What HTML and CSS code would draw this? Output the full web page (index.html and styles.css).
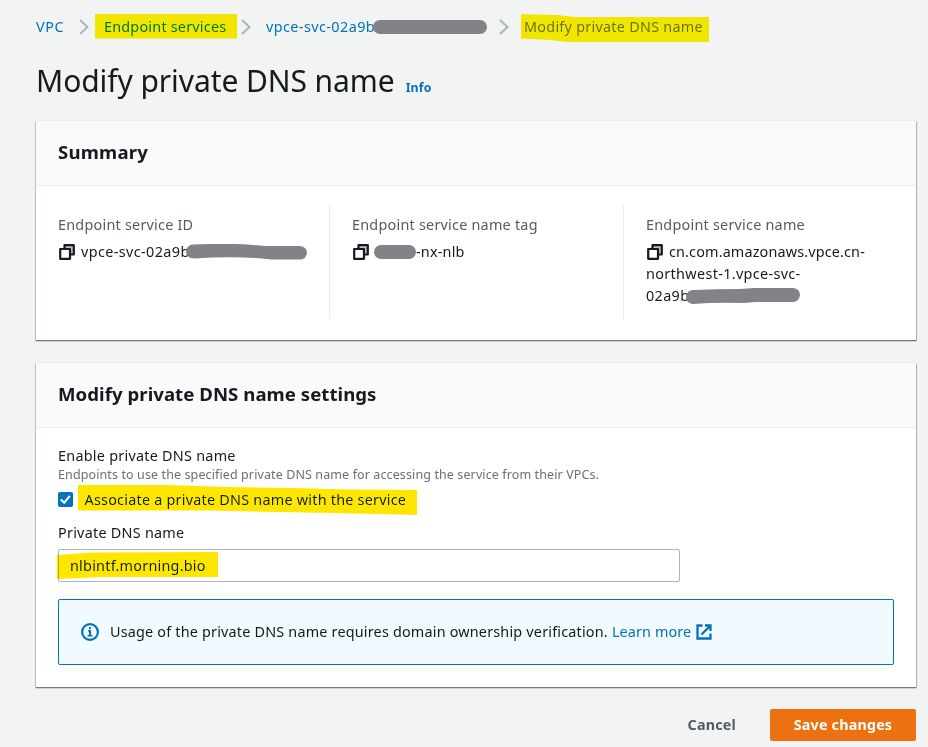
FILE: index.html
```html
<!DOCTYPE html>
<html lang="en">
<head>
<meta charset="utf-8">
<title>Modify private DNS name</title>
<link rel="stylesheet" href="styles.css">
</head>
<body>
<svg class="defs" width="0" height="0">
  <symbol id="copy" viewBox="0 0 16 16">
    <path d="M5.500 5V1.200H14.800V10.500H11" fill="#bfc1c4" stroke="#16191f" stroke-width="2.200" stroke-linejoin="round"/>
    <rect x="1.200" y="5" width="9.800" height="9.800" fill="#fff" stroke="#16191f" stroke-width="2.200" stroke-linejoin="round"/>
  </symbol>
  <symbol id="chevron" viewBox="0 0 10 16">
    <path d="M1 1L8.500 8L1 15" fill="none" stroke="#aab7b8" stroke-width="2"/>
  </symbol>
</svg>
<main class="page">
  <nav class="crumbs">
    <a class="crumb crumb-vpc">VPC</a>
    <svg class="chev"><use href="#chevron"/></svg>
    <a class="crumb crumb-services">Endpoint services<svg class="mark mark-services" viewBox="0 0 142 25"><path d="M0 0H142V24.500H0Z"/></svg></a>
    <svg class="chev"><use href="#chevron"/></svg>
    <a class="crumb crumb-id">vpce-svc-02a9b<i class="redact redact-crumb"></i></a>
    <svg class="chev"><use href="#chevron"/></svg>
    <span class="crumb crumb-current">Modify private DNS name<svg class="mark mark-current" viewBox="0 0 188 28"><path d="M0 0L36 1L54 3H188V28H45L30 26L0 24.500Z"/></svg></span>
  </nav>
  <header class="title-row">
    <h1>Modify private DNS name</h1>
    <a class="info">Info</a>
  </header>

  <section class="card summary">
    <div class="card-head"><h2 class="h-summary">Summary</h2></div>
    <div class="columns">
      <div class="col">
        <div class="label">Endpoint service ID</div>
        <div class="value"><svg class="copy"><use href="#copy"/></svg><span class="v-id">vpce-svc-02a9b</span><svg class="scribble scribble-id" viewBox="0 0 121 16"><path d="M7 0.500Q30-.5 58 .2L80 2H114Q121 3 121 9Q120 15.500 114 15.500H86L70 14Q40 12.500 8 14.500Q0 14 0 7Q1 1 7 .5Z"/></svg></div>
      </div>
      <div class="col">
        <div class="label">Endpoint service name tag</div>
        <div class="value"><svg class="copy"><use href="#copy"/></svg><i class="redact redact-tag"></i><span class="v-tag">-nx-nlb</span></div>
      </div>
      <div class="col">
        <div class="label">Endpoint service name</div>
        <div class="value"><svg class="copy"><use href="#copy"/></svg><span class="v-n1">cn.com.amazonaws.vpce.cn-</span><br><span class="v-n2">northwest-1.vpce-svc-</span><br><span class="v-n3">02a9b</span><svg class="scribble scribble-name" viewBox="0 0 114 16"><path d="M7 2Q32 1 54 1L68 0H107Q114 1 114 7Q113 14 107 14H70L58 15Q30 14 7 16Q0 15 0 9Q1 2 7 2Z"/></svg></div>
      </div>
    </div>
  </section>

  <section class="card settings">
    <div class="card-head"><h2 class="h-settings">Modify private DNS name settings</h2></div>
    <div class="form">
      <div class="field-label">Enable private DNS name</div>
      <div class="hint">Endpoints to use the specified private DNS name for accessing the service from their VPCs.</div>
      <div class="check-row">
        <svg class="check" viewBox="0 0 15 15"><rect width="15" height="15" rx="2" fill="#0073bb"/><path d="M2.800 7.500L6.200 10.700L11.800 4" fill="none" stroke="#fff" stroke-width="2.200"/></svg>
        <span class="check-text">Associate a private DNS name with the service</span>
        <svg class="mark mark-check" viewBox="0 0 339 30"><path d="M0 0H90L150 2L215 3L270 4.500L339 5V30L255 28L200 27L130 25.500H0Z"/></svg>
      </div>
      <div class="field-label">Private DNS name</div>
      <div class="input"><span>nlbintf.morning.bio</span><svg class="mark mark-input" viewBox="0 0 161 27"><path d="M0 3L35 .5L161 0V25H45L0 27Z"/></svg></div>
      <div class="alert">
        <svg class="info-icon" viewBox="0 0 18 18"><circle cx="9" cy="9" r="7.900" fill="none" stroke="#0073bb" stroke-width="2.200"/><path d="M8 4H10V6H8ZM7 7H10V12H11.500V13.500H6.500V12H8V8.500H7Z" fill="#0073bb"/></svg>
        <span class="a-text">Usage of the private DNS name requires domain ownership verification.</span>
        <a class="a-link">Learn more</a>
        <svg class="external" viewBox="0 0 16 16"><path d="M6.500 1.500H1.500V14.500H14.500V9.500M9 1.500H14.500V7M14.500 1.500L5.500 10.500" fill="none" stroke="#0073bb" stroke-width="2.300"/></svg>
      </div>
    </div>
  </section>

  <footer class="actions">
    <a class="cancel">Cancel</a>
    <button class="save">Save changes</button>
  </footer>
</main>
</body>
</html>
```
FILE: styles.css
```css
* { box-sizing: border-box; }
body { margin: 0; background: #f2f3f3; color: #16191f; font: 14.4px/22px "Noto Sans", sans-serif; }
h1, h2 { margin: 0; }
.defs { position: absolute; }
.page { width: 928px; height: 747px; padding: 16px 12px 0 36px; overflow: hidden; white-space: nowrap; }
.crumbs { display: flex; align-items: center; height: 22px; color: #0073bb; }
.crumb { position: relative; display: block; flex: none; }
.crumb-vpc { width: 43px; letter-spacing: .6px; }
.crumb-services { width: 122px; margin: 0 15px; letter-spacing: .21px; }
.crumb-id { width: 218px; margin: 0 15px; letter-spacing: .42px; }
.crumb-current { margin-left: 15px; color: #687078; letter-spacing: .26px; }
.chev { flex: none; width: 10px; height: 16px; }
.mark { position: absolute; fill: #ffe600; mix-blend-mode: darken; }
.mark-services { left: -9px; top: -2px; width: 142px; height: 25px; }
.mark-current { left: -3px; top: -2px; width: 188px; height: 28px; }
.redact { display: inline-block; height: 14px; border-radius: 7px; background: #828388; }
.redact-crumb { position: absolute; left: 107px; top: 4px; width: 114px; }
.title-row { display: flex; align-items: baseline; gap: 11px; height: 83px; padding-top: 25px; }
h1 { font-size: 30px; line-height: 36px; font-weight: 400; letter-spacing: -.08px; }
.info { color: #0073bb; font-size: 12.3px; font-weight: 700; letter-spacing: .2px; }
.card { width: 880px; background: #fff; box-shadow: 0 1px 1px #6f7b80, 1px 1px 1px #b8bfc2, -1px 1px 1px #ccd1d2, 0 -1px 0 #eaeded; }
.summary { height: 219px; margin-bottom: 23px; }
.settings { height: 324px; }
.card-head { height: 65px; padding: 0 22px; background: #fafafa; border-bottom: 1px solid #eaeded; }
h2 { font-size: 18.6px; line-height: 62px; font-weight: 700; }
.h-summary { letter-spacing: .2px; }
.h-settings { letter-spacing: .05px; }
.columns { display: grid; grid-template-columns: 294px 294px 292px; padding-top: 18px; }
.col { height: 115px; padding: 10px 0 0 22px; border-right: 1px solid #eaeded; }
.col:last-child { border: 0; }
.label { color: #545b64; margin-bottom: 5px; letter-spacing: .23px; }
.value { position: relative; }
.copy { width: 16px; height: 16px; margin: 0 6px 0 1px; vertical-align: -3px; }
.v-id { letter-spacing: .39px; }
.v-tag { letter-spacing: .2px; }
.v-n1 { letter-spacing: .15px; }
.v-n2 { letter-spacing: .34px; }
.v-n3 { letter-spacing: .35px; }
.scribble { position: absolute; height: 16px; fill: #828388; }
.scribble-id { left: 128px; top: 3px; width: 121px; }
.scribble-name { left: 40px; top: 47px; width: 114px; }
.redact-tag { width: 42px; vertical-align: -2px; margin-left: -1px; }
.form { padding: 17px 22px 0; }
.field-label { letter-spacing: .25px; }
.hint { color: #687078; font-size: 12.5px; line-height: 16px; letter-spacing: .11px; }
.check-row { position: relative; display: flex; align-items: center; height: 34px; margin-bottom: 5px; padding-bottom: 1px; }
.check { width: 15px; height: 15px; margin-right: 11.5px; }
.check-text { letter-spacing: .23px; }
.mark-check { left: 20px; top: 2px; width: 339px; height: 30px; }
.input { position: relative; width: 622px; height: 33px; margin-top: 5px; padding-left: 11px; border: 1px solid #aab7b8; border-radius: 2px; line-height: 32px; letter-spacing: .23px; }
.mark-input { left: -2px; top: 2px; width: 161px; height: 27px; }
.alert { display: flex; align-items: center; height: 66px; margin-top: 17px; padding-left: 22px; border: 1px solid #0073bb; border-radius: 2px; background: #f1faff; }
.info-icon { width: 18px; height: 18px; margin-right: 11px; }
.a-text { letter-spacing: .19px; }
.a-link { color: #0073bb; margin: 0 5px 0 4px; letter-spacing: .12px; }
.external { width: 16px; height: 16px; }
.actions { display: flex; justify-content: flex-end; align-items: center; padding-top: 22px; font-size: 14.3px; font-weight: 700; letter-spacing: .2px; }
.cancel { color: #545b64; margin-right: 34px; }
.save { width: 146px; height: 32px; padding: 0; border: 0; border-radius: 2px; background: #ec7211; color: #fff; font: inherit; letter-spacing: inherit; }
```
